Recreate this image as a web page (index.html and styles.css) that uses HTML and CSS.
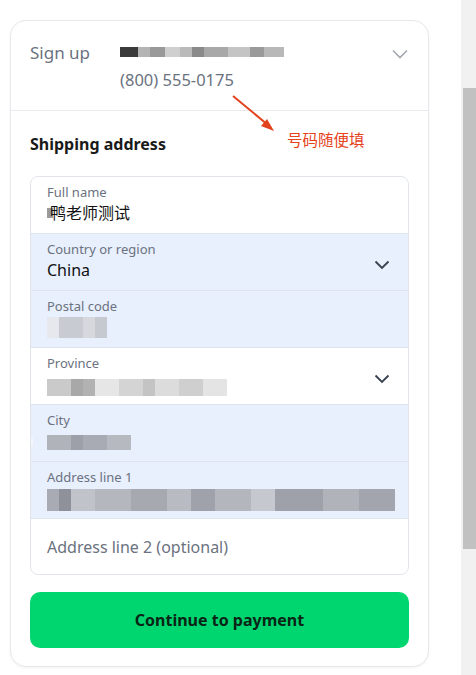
FILE: index.html
```html
<!DOCTYPE html>
<html lang="zh">
<head>
<meta charset="utf-8">
<title>Checkout</title>
<link rel="stylesheet" href="styles.css">
</head>
<body>
<div class="page">
  <div class="card">
    <section class="signup">
      <div class="signup-label">Sign up</div>
      <div class="signup-details">
        <span class="blur blur-email"></span>
        <div class="phone">(800) 555-0175</div>
      </div>
      <svg class="chev chev-light" width="16" height="10" viewBox="0 0 16 10"><path d="M1 1.5l7 7 7-7" fill="none" stroke="currentColor" stroke-width="1.6"/></svg>
    </section>
    <section class="shipping">
      <h2 class="title">Shipping address</h2>
      <div class="form">
        <div class="row">
          <div class="field"><div class="label">Full name</div><div class="value"><span class="blur blur-first"></span>鸭老师测试</div></div>
        </div>
        <div class="row filled">
          <div class="field"><div class="label">Country or region</div><div class="value">China</div></div>
          <svg class="chev" width="16" height="10" viewBox="0 0 16 10"><path d="M1.5 1.5l6.5 6.5 6.5-6.5" fill="none" stroke="currentColor" stroke-width="1.8"/></svg>
        </div>
        <div class="row filled">
          <div class="field"><div class="label">Postal code</div><div class="value"><span class="blur blur-postal"></span></div></div>
        </div>
        <div class="row">
          <div class="field"><div class="label">Province</div><div class="value"><span class="blur blur-province"></span></div></div>
          <svg class="chev" width="16" height="10" viewBox="0 0 16 10"><path d="M1.5 1.5l6.5 6.5 6.5-6.5" fill="none" stroke="currentColor" stroke-width="1.8"/></svg>
        </div>
        <div class="row filled">
          <div class="field"><div class="label">City</div><div class="value"><span class="blur blur-city"></span></div></div>
          <span class="blur-stray"></span>
        </div>
        <div class="row filled">
          <div class="field"><div class="label">Address line 1</div><div class="value"><span class="blur blur-addr"></span></div></div>
        </div>
        <div class="row placeholder-row">
          <div class="placeholder">Address line 2 (optional)</div>
        </div>
      </div>
      <button class="pay">Continue to payment</button>
    </section>
  </div>

  <div class="note">
    <svg class="arrow" width="60" height="50" viewBox="0 0 60 50"><line x1="3" y1="2" x2="38" y2="31" stroke="#e2431d" stroke-width="2"/><path d="M44 37 L31 32 L37 25 Z" fill="#e2431d"/></svg>
    <span class="note-text">号码随便填</span>
  </div>
</div>
<div class="scrollbar"><div class="thumb"></div></div>
</body>
</html>
```
FILE: styles.css
```css
html, body {
  margin: 0;
  padding: 0;
  background: #ffffff;
}
body {
  font-family: "Noto Sans", "Noto Sans CJK SC", sans-serif;
  color: #1a1a1a;
  width: 461px;
  overflow: hidden;
}
.page {
  position: relative;
  padding: 20px 0 8px 10px;
}
.card {
  width: 417px;
  border: 1px solid #e6e8ec;
  border-radius: 16px;
  box-shadow: 0 1px 3px rgba(0, 0, 0, 0.05);
  background: #fff;
  overflow: hidden;
}
.signup {
  display: flex;
  align-items: flex-start;
  height: 90px;
  box-sizing: border-box;
  padding: 20px 20px 0 19px;
  border-bottom: 1px solid #e8eaee;
}
.signup-label {
  width: 90px;
  font-size: 17px;
  line-height: 24px;
  color: #6b7280;
}
.signup-details {
  flex: 1;
  padding-top: 3px;
}
.phone {
  font-size: 16.5px;
  line-height: 24px;
  color: #6b7280;
}
.chev {
  color: #374151;
  flex: none;
  align-self: center;
}
.chev-light {
  color: #a3a8b1;
  margin-top: 8px;
  align-self: flex-start;
}
.shipping {
  padding: 21px 19px 18px 19px;
}
.title {
  margin: 0 0 20px 0;
  font-size: 16px;
  line-height: 24px;
  font-weight: 700;
  color: #1a1a1a;
}
.form {
  border: 1px solid #e1e5ea;
  border-radius: 8px;
  overflow: hidden;
}
.row {
  display: flex;
  align-items: flex-start;
  height: 56px;
  box-sizing: border-box;
  padding: 6px 18px 0 16px;
  position: relative;
}
.row + .row {
  border-top: 1px solid #dfe4ec;
  height: 57px;
}
.row.placeholder-row {
  height: 56px;
  align-items: center;
  padding-top: 0;
}
.row.filled {
  background: #e8effd;
}
.field {
  flex: 1;
}
.label {
  font-size: 13px;
  line-height: 19px;
  color: #6b7280;
}
.value {
  font-size: 16px;
  line-height: 22px;
  color: #111;
  height: 22px;
  display: flex;
  align-items: center;
}
.placeholder {
  font-size: 16px;
  color: #6b7280;
  padding-top: 1px;
}
.pay {
  display: block;
  width: 100%;
  margin-top: 17px;
  height: 56px;
  border: none;
  border-radius: 10px;
  background: #00d66f;
  font-family: inherit;
  font-size: 16px;
  font-weight: 700;
  color: #0a2416;
  cursor: pointer;
}
.blur {
  display: inline-block;
  height: 18px;
}
.blur-email {
  width: 164px;
  height: 19px;
  background: linear-gradient(to right, #3a3a3a 0 18px, #b4b4b4 18px 30px, #999 30px 45px, #cfcfcf 45px 60px, #bababa 60px 72px, #8a8a8a 72px 84px, #a8a8a8 84px 108px, #c4c4c4 108px 130px, #9a9a9a 130px 144px, #b8b8b8 144px 164px);
  background-size: 164px 12px;
  background-repeat: no-repeat;
  background-position: 0 3px;
  box-shadow: inset 0 -6px 0 #fff;
}
.blur-first {
  width: 6px;
  height: 10px;
  background: #9a9a9a;
  margin-right: -3px;
}
.blur-postal {
  width: 60px;
  height: 21px;
  background: linear-gradient(to right, #e6e8ee 0 12px, #c8cbd2 12px 36px, #d6d8de 36px 48px, #c6c9d0 48px 60px);
}
.blur-province {
  width: 180px;
  height: 17px;
  background: linear-gradient(to right, #cacaca 0 24px, #a8a8a8 24px 36px, #b2b2b2 36px 48px, #e6e6e6 48px 72px, #d4d4d4 72px 96px, #c4c4c4 96px 108px, #dcdcdc 108px 132px, #cfcfcf 132px 156px, #e4e4e4 156px 180px);
  margin-top: 6px;
}
.blur-city {
  width: 84px;
  height: 15px;
  background: linear-gradient(to right, #b0b3ba 0 24px, #9da0a8 24px 36px, #a8abb3 36px 60px, #b6b9c0 60px 84px);
  margin-top: 2px;
}
.blur-stray {
  position: absolute;
  left: -22px;
  top: 33px;
  width: 24px;
  height: 8px;
  background: #f4f5f7;
}
.blur-addr {
  width: 348px;
  height: 22px;
  background: linear-gradient(to right, #a8abb3 0 12px, #8e9199 12px 24px, #c0c3ca 24px 48px, #b4b7be 48px 84px, #a6a9b0 84px 120px, #b8bbc2 120px 144px, #9fa2aa 144px 168px, #b3b6bd 168px 204px, #c5c8cf 204px 228px, #9ea1a9 228px 276px, #b0b3ba 276px 312px, #a2a5ad 312px 348px);
  margin-top: 4px;
}
.note {
  position: absolute;
  left: 230px;
  top: 94px;
  width: 150px;
  height: 60px;
}
.arrow {
  position: absolute;
  left: 0;
  top: 0;
}
.note-text {
  position: absolute;
  left: 57px;
  top: 35px;
  font-family: "Noto Sans CJK SC", sans-serif;
  font-size: 15.5px;
  line-height: 20px;
  color: #e5431c;
  white-space: nowrap;
}
.scrollbar {
  position: fixed;
  right: 0;
  top: 0;
  width: 15px;
  height: 100%;
  background: #f1f1f1;
}
.thumb {
  position: absolute;
  left: 2px;
  right: 0;
  top: 88px;
  height: 461px;
  background: #c1c1c1;
}
```
